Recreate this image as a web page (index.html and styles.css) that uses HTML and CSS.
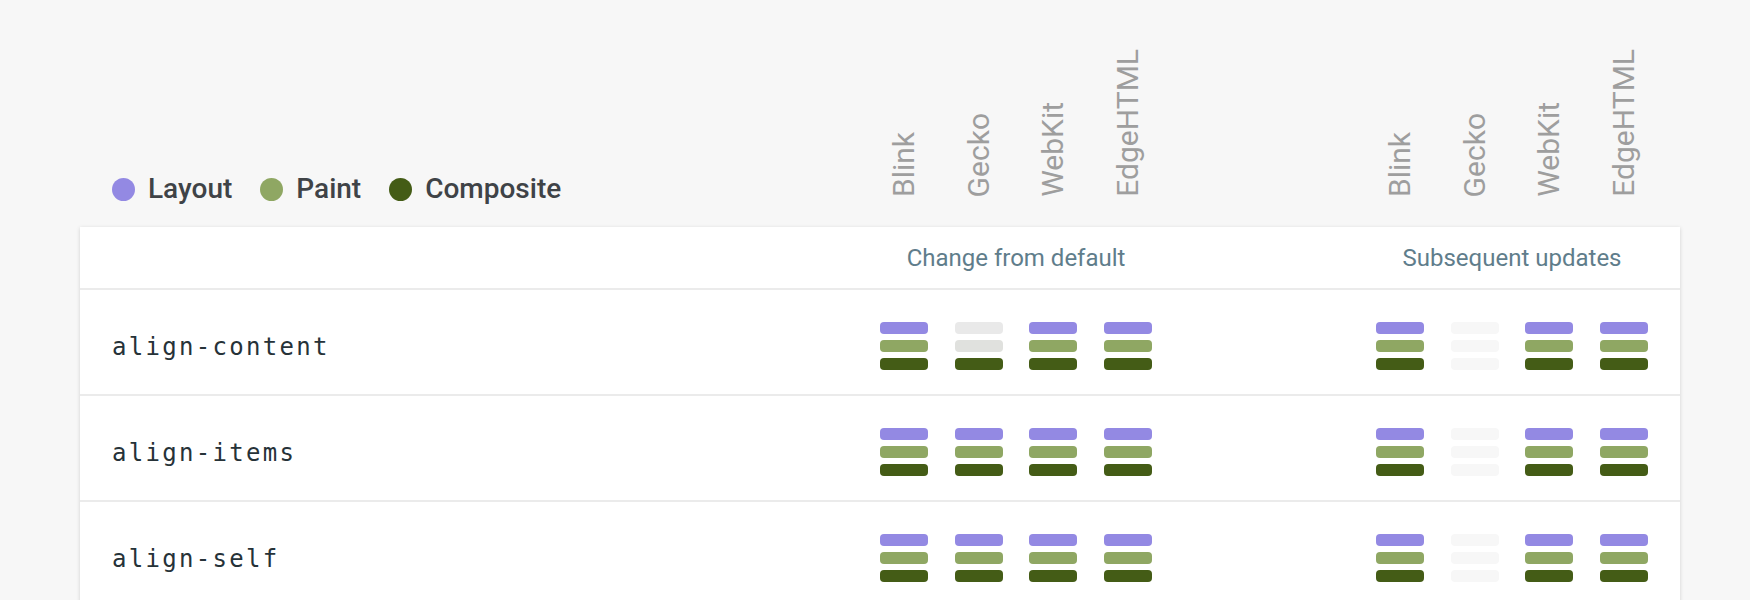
FILE: index.html
```html
<!DOCTYPE html>
<html lang="en">
<head>
<meta charset="utf-8">
<title>CSS Triggers</title>
<link rel="stylesheet" href="styles.css">
</head>
<body>
<div class="page">
  <header class="top">
    <div class="legend">
      <span class="key"><i class="dot layout"></i>Layout</span>
      <span class="key"><i class="dot paint"></i>Paint</span>
      <span class="key"><i class="dot composite"></i>Composite</span>
    </div>
    <div class="engines">
      <div class="engine"><span>Blink</span></div>
      <div class="engine"><span>Gecko</span></div>
      <div class="engine"><span>WebKit</span></div>
      <div class="engine"><span>EdgeHTML</span></div>
    </div>
    <div class="engines">
      <div class="engine"><span>Blink</span></div>
      <div class="engine"><span>Gecko</span></div>
      <div class="engine"><span>WebKit</span></div>
      <div class="engine"><span>EdgeHTML</span></div>
    </div>
  </header>

  <section class="card">
    <div class="row head">
      <div class="name"></div>
      <div class="group-title">Change from default</div>
      <div class="group-title">Subsequent updates</div>
    </div>

    <div class="row">
      <div class="name">align-content</div>
      <div class="group">
        <div class="stack"><b class="bar l"></b><b class="bar p"></b><b class="bar c"></b></div>
        <div class="stack"><b class="bar off1"></b><b class="bar off2"></b><b class="bar c"></b></div>
        <div class="stack"><b class="bar l"></b><b class="bar p"></b><b class="bar c"></b></div>
        <div class="stack"><b class="bar l"></b><b class="bar p"></b><b class="bar c"></b></div>
      </div>
      <div class="group">
        <div class="stack"><b class="bar l"></b><b class="bar p"></b><b class="bar c"></b></div>
        <div class="stack"><b class="bar none"></b><b class="bar none"></b><b class="bar none"></b></div>
        <div class="stack"><b class="bar l"></b><b class="bar p"></b><b class="bar c"></b></div>
        <div class="stack"><b class="bar l"></b><b class="bar p"></b><b class="bar c"></b></div>
      </div>
    </div>

    <div class="row">
      <div class="name">align-items</div>
      <div class="group">
        <div class="stack"><b class="bar l"></b><b class="bar p"></b><b class="bar c"></b></div>
        <div class="stack"><b class="bar l"></b><b class="bar p"></b><b class="bar c"></b></div>
        <div class="stack"><b class="bar l"></b><b class="bar p"></b><b class="bar c"></b></div>
        <div class="stack"><b class="bar l"></b><b class="bar p"></b><b class="bar c"></b></div>
      </div>
      <div class="group">
        <div class="stack"><b class="bar l"></b><b class="bar p"></b><b class="bar c"></b></div>
        <div class="stack"><b class="bar none"></b><b class="bar none"></b><b class="bar none"></b></div>
        <div class="stack"><b class="bar l"></b><b class="bar p"></b><b class="bar c"></b></div>
        <div class="stack"><b class="bar l"></b><b class="bar p"></b><b class="bar c"></b></div>
      </div>
    </div>

    <div class="row">
      <div class="name">align-self</div>
      <div class="group">
        <div class="stack"><b class="bar l"></b><b class="bar p"></b><b class="bar c"></b></div>
        <div class="stack"><b class="bar l"></b><b class="bar p"></b><b class="bar c"></b></div>
        <div class="stack"><b class="bar l"></b><b class="bar p"></b><b class="bar c"></b></div>
        <div class="stack"><b class="bar l"></b><b class="bar p"></b><b class="bar c"></b></div>
      </div>
      <div class="group">
        <div class="stack"><b class="bar l"></b><b class="bar p"></b><b class="bar c"></b></div>
        <div class="stack"><b class="bar none"></b><b class="bar none"></b><b class="bar none"></b></div>
        <div class="stack"><b class="bar l"></b><b class="bar p"></b><b class="bar c"></b></div>
        <div class="stack"><b class="bar l"></b><b class="bar p"></b><b class="bar c"></b></div>
      </div>
    </div>
  </section>
</div>
</body>
</html>
```

FILE: styles.css
```css
* { box-sizing: border-box; }

html, body {
  margin: 0;
  padding: 0;
  background: #f7f7f7;
}

body {
  font-family: Roboto, "Noto Sans", sans-serif;
  color: #3c4043;
}

.page {
  width: 1680px;
  padding-left: 80px;
}

.top,
.row {
  display: grid;
  grid-template-columns: 1fr 298.67px 298.67px;
  column-gap: 197.33px;
  padding-right: 18.67px;
}

.top {
  height: 227px;
  align-items: end;
  padding-bottom: 23px;
}

.legend {
  display: flex;
  align-items: center;
  padding-left: 32px;
  height: 30px;
}

.key {
  display: inline-flex;
  align-items: center;
  gap: 13px;
  margin-right: 28px;
  font-size: 28px;
  font-weight: 500;
  line-height: 30px;
  color: #3f4347;
}

.dot {
  display: block;
  width: 23px;
  height: 23px;
  border-radius: 50%;
}

.dot.layout { background: #9389e3; }
.dot.paint { background: #8fa763; }
.dot.composite { background: #445c16; }

.engines {
  display: grid;
  grid-template-columns: repeat(4, 1fr);
  padding-bottom: 7px;
}

.engine {
  display: flex;
  justify-content: center;
  align-items: flex-end;
}

.engine span {
  writing-mode: vertical-rl;
  transform: rotate(180deg);
  font-size: 30px;
  line-height: 30px;
  color: #9e9e9e;
  white-space: nowrap;
}

.card {
  width: 1600px;
  background: #fff;
  box-shadow: 0 1px 4px rgba(0, 0, 0, 0.16);
}

.row {
  border-top: 2px solid #ebebeb;
  padding-top: 32px;
  padding-bottom: 24px;
  align-items: center;
}

.row.head {
  border-top: none;
  height: 61px;
  padding-top: 0;
  padding-bottom: 0;
}

.group-title {
  text-align: center;
  font-size: 24px;
  color: #607d8b;
}

.name {
  padding-left: 32px;
  padding-top: 2px;
  font-family: "DejaVu Sans Mono", "Liberation Mono", monospace;
  font-size: 24px;
  letter-spacing: 2.3px;
  color: #263238;
}

.group {
  display: grid;
  grid-template-columns: repeat(4, 1fr);
  justify-items: center;
}

.stack {
  display: flex;
  flex-direction: column;
  gap: 6px;
  width: 48px;
}

.bar {
  display: block;
  height: 12px;
  border-radius: 4px;
}

.bar.l { background: #9389e3; }
.bar.p { background: #8fa763; }
.bar.c { background: #445c16; }
.bar.off1 { background: #e9e9e9; }
.bar.off2 { background: #e0e1de; }
.bar.none { background: #f7f7f7; }
```
